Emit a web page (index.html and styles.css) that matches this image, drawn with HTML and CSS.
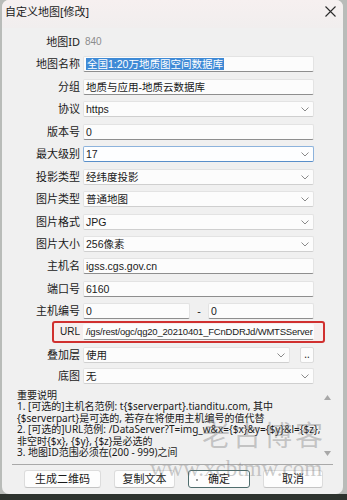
FILE: index.html
```html
<!DOCTYPE html>
<html lang="zh-CN">
<head>
<meta charset="utf-8">
<title>自定义地图[修改]</title>
<link rel="stylesheet" href="styles.css">
</head>
<body>
<div class="screen">
  <div class="dialog">
    <div class="titlebar">
      <span class="title">自定义地图[修改]</span>
      <svg class="close" width="11" height="11" viewBox="0 0 11 11"><path d="M0.5 0.5 L10.5 10.5 M10.5 0.5 L0.5 10.5" stroke="#2b2b2b" stroke-width="1.1" fill="none"/></svg>
    </div>

    <div class="form">
      <label>地图ID</label><span class="static">840</span>
      <label>地图名称</label><div class="field text"><span class="sel">全国1:20万地质图空间数据库</span></div>
      <label>分组</label><div class="field text">地质与应用-地质云数据库</div>
      <label>协议</label><div class="field combo">https<svg class="chev" width="8" height="5" viewBox="0 0 8 5"><polyline points="0.5,0.5 4,4 7.5,0.5" stroke="#8a8a8a" fill="none"/></svg></div>
      <label>版本号</label><div class="field text">0</div>
      <label>最大级别</label><div class="field combo focus">17<svg class="chev" width="8" height="5" viewBox="0 0 8 5"><polyline points="0.5,0.5 4,4 7.5,0.5" stroke="#8a8a8a" fill="none"/></svg></div>
      <label>投影类型</label><div class="field combo">经纬度投影<svg class="chev" width="8" height="5" viewBox="0 0 8 5"><polyline points="0.5,0.5 4,4 7.5,0.5" stroke="#8a8a8a" fill="none"/></svg></div>
      <label>图片类型</label><div class="field combo">普通地图<svg class="chev" width="8" height="5" viewBox="0 0 8 5"><polyline points="0.5,0.5 4,4 7.5,0.5" stroke="#8a8a8a" fill="none"/></svg></div>
      <label>图片格式</label><div class="field combo">JPG<svg class="chev" width="8" height="5" viewBox="0 0 8 5"><polyline points="0.5,0.5 4,4 7.5,0.5" stroke="#8a8a8a" fill="none"/></svg></div>
      <label>图片大小</label><div class="field combo">256像素<svg class="chev" width="8" height="5" viewBox="0 0 8 5"><polyline points="0.5,0.5 4,4 7.5,0.5" stroke="#8a8a8a" fill="none"/></svg></div>
      <label>主机名</label><div class="field text">igss.cgs.gov.cn</div>
      <label>端口号</label><div class="field text">6160</div>
      <label>主机编号</label>
      <div class="pair">
        <div class="field text">0</div>
        <span class="dash">-</span>
        <div class="field text">0</div>
      </div>
    </div>

    <div class="urlbox">
      <label>URL</label><div class="field text url">/igs/rest/ogc/qg20_20210401_FCnDDRJd/WMTSServer</div>
    </div>

    <div class="form form2">
      <label>叠加层</label>
      <div class="pair2">
        <div class="field combo">使用<svg class="chev" width="8" height="5" viewBox="0 0 8 5"><polyline points="0.5,0.5 4,4 7.5,0.5" stroke="#8a8a8a" fill="none"/></svg></div>
        <div class="dots">..</div>
      </div>
      <label>底图</label><div class="field combo">无<svg class="chev" width="8" height="5" viewBox="0 0 8 5"><polyline points="0.5,0.5 4,4 7.5,0.5" stroke="#8a8a8a" fill="none"/></svg></div>
    </div>

    <div class="notes">
      <div class="notes-text">
        <div>重要说明</div>
        <div>1. [可选的]主机名范例: t{$serverpart}.tianditu.com, 其中</div>
        <div>{$serverpart}是可选的, 若存在将使用主机编号的值代替</div>
        <div>2. [可选的]URL范例: /DataServer?T=img_w&amp;x={$x}&amp;y={$y}&amp;l={$z},</div>
        <div>非空时{$x}, {$y}, {$z}是必选的</div>
        <div>3. 地图ID范围必须在(200 - 999)之间</div>
      </div>
      <div class="scroll">
        <svg width="7" height="5" viewBox="0 0 7 5"><polygon points="0,5 3.5,0 7,5" fill="#a8a8a8"/></svg>
        <svg width="7" height="5" viewBox="0 0 7 5"><polygon points="0,0 3.5,5 7,0" fill="#a8a8a8"/></svg>
      </div>
    </div>

    <div class="divider"></div>

    <div class="buttons">
      <div class="btn w1">生成二维码</div>
      <div class="btn w2">复制文本</div>
      <div class="btn w3 default"><span class="dot"></span>确定</div>
      <div class="btn w4">取消</div>
    </div>
  </div>
  <div class="wm wm1">老古博客</div>
  <div class="wm wm2">www.xcbtmw.com</div>
</div>
</body>
</html>
```

FILE: styles.css
```css
* { box-sizing: border-box; }
html, body { margin: 0; padding: 0; }
body {
  width: 347px;
  height: 500px;
  overflow: hidden;
  background: #2d332e;
  font-family: "Noto Sans", "Noto Sans CJK SC", sans-serif;
  font-size: 11px;
  color: #1a1a1a;
}
.screen {
  position: relative;
  width: 347px;
  height: 500px;
  background: linear-gradient(to bottom, #b9bcb9 0, #b9bcb9 494px, #2d332e 494px);
  padding-left: 2px;
}
.dialog {
  width: 341px;
  height: 494px;
  background: #f0f0f0;
  border-radius: 7px;
  overflow: hidden;
  display: flex;
  flex-direction: column;
}
.titlebar {
  height: 28px;
  display: flex;
  align-items: flex-start;
  justify-content: space-between;
  padding: 4px 7px 0 3px;
  background: linear-gradient(to bottom, #f6f0f0, #f1eeee);
}
.title { font-size: 11px; line-height: 16px; color: #1a1a1a; }
.close { margin-top: 2px; }

.form {
  display: grid;
  grid-template-columns: 78px 231px;
  column-gap: 3px;
  grid-auto-rows: 16px;
  row-gap: 6.45px;
  padding-top: 6px;
  align-items: center;
}
.form label, .urlbox label {
  text-align: right;
  white-space: nowrap;
  line-height: 16px;
  color: #1a1a1a;
}
.static { color: #8c8c8c; font-size: 10px; padding-left: 2px; line-height: 16px; font-family: "Liberation Sans", sans-serif; }

.field {
  height: 16px;
  background: #fcfcfc;
  border: 1px solid #e3e3e3;
  border-radius: 2px;
  line-height: 14px;
  padding-left: 2px;
  white-space: nowrap;
  overflow: hidden;
  position: relative;
  font-family: "Liberation Sans", "Noto Sans CJK SC", sans-serif;
  font-size: 10.5px;
}
.field.text { border-bottom-color: #8e8e8e; }
.field.combo { border-bottom-color: #cfcfcf; }
.field.focus { border-color: #8db3dc; border-bottom-color: #5a8fc9; background: #fdfeff; }
.chev { position: absolute; right: 4px; top: 5px; }
.sel { background: #3f8ad6; color: #fff; padding: 0 1px; }

.pair { display: flex; align-items: center; height: 16px; }
.pair .field { width: 107px; }
.pair .dash { width: 18px; text-align: center; line-height: 16px; }
.pair .field:last-child { width: 106px; }

.urlbox {
  margin-top: 1.5px;
  margin-left: 50px;
  width: 273px;
  border: 2px solid #d0302f;
  border-radius: 3px;
  padding: 1px 0;
  display: grid;
  grid-template-columns: 26px 231px;
  column-gap: 3px;
  align-items: center;
  background: #f6eeee;
}
.urlbox label { font-family: "Liberation Sans", sans-serif; font-size: 10px; }
.url { font-size: 9.5px; border-color: #fcfcfc; padding-left: 2px; letter-spacing: -0.2px; }

.form2 { padding-top: 4px; row-gap: 5px; }
.pair2 { display: flex; align-items: center; gap: 10px; }
.pair2 .field { width: 207px; }
.dots {
  width: 14px;
  height: 16px;
  background: #fcfcfc;
  border: 1px solid #dcdcdc;
  border-radius: 2px;
  line-height: 12px;
  text-align: center;
  font-size: 10px;
}

.notes {
  margin-top: 6px;
  padding-left: 15px;
  padding-right: 12px;
  display: flex;
  justify-content: space-between;
}
.notes-text { line-height: 11.5px; font-size: 10px; white-space: nowrap; color: #1a1a1a; }
.scroll {
  display: flex;
  flex-direction: column;
  justify-content: space-between;
  padding: 5px 0 3px;
}

.divider {
  margin: 5px 10px 0 10px;
  height: 1px;
  background: #a9a9a9;
}
.buttons {
  display: flex;
  gap: 13px;
  padding-left: 22px;
  margin-top: 5px;
}
.btn {
  height: 18px;
  background: #fdfdfd;
  border: 1px solid #dcdcdc;
  border-bottom-color: #c4c4c4;
  border-radius: 3px;
  text-align: center;
  line-height: 16px;
  font-size: 11px;
  position: relative;
}
.w1 { width: 77px; }
.w2 { width: 61px; }
.w3 { width: 62px; }
.w4 { width: 60px; }
.btn.default { border: 1px solid #4f6d6d; }
.dot {
  position: absolute;
  left: 7px;
  top: 8px;
  width: 2px;
  height: 2px;
  background: #9a9a9a;
}

.wm {
  position: absolute;
  font-family: "Liberation Serif", "Noto Sans CJK SC", serif;
  color: rgba(110, 110, 110, 0.35);
  pointer-events: none;
  white-space: nowrap;
}
.wm1 { left: 202px; top: 420px; font-size: 28px; letter-spacing: 3px; line-height: 34px; }
.wm2 { left: 150px; top: 455px; font-size: 23px; letter-spacing: 0; line-height: 28px; }
```
